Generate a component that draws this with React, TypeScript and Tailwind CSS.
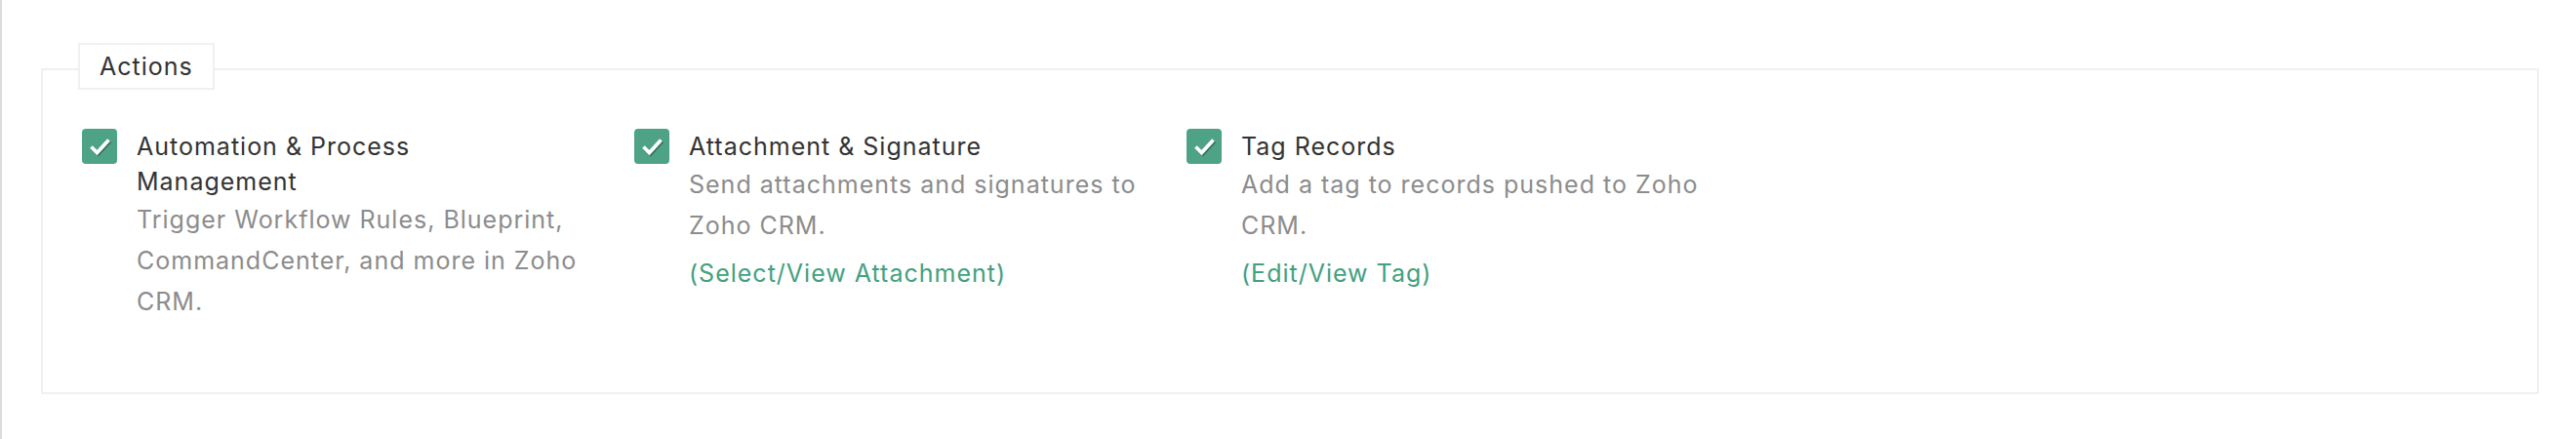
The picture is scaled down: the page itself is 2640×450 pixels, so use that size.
import React from "react";

type Action = {
  title: string;
  description: string;
  link?: string;
};

const actions: Action[] = [
  {
    title: "Automation & Process Management",
    description: "Trigger Workflow Rules, Blueprint, CommandCenter, and more in Zoho CRM.",
  },
  {
    title: "Attachment & Signature",
    description: "Send attachments and signatures to Zoho CRM.",
    link: "(Select/View Attachment)",
  },
  {
    title: "Tag Records",
    description: "Add a tag to records pushed to Zoho CRM.",
    link: "(Edit/View Tag)",
  },
];

function CheckedBox() {
  return (
    <div className="w-9 h-9 shrink-0 rounded-[4px] bg-[#4ea386]">
      <svg viewBox="0 0 36 36" className="w-9 h-9">
        <path d="M9.5 18.5 L15.5 24.5 L27.5 11.5" fill="none" stroke="rgba(0,0,0,0.3)" strokeWidth="3.8" transform="translate(1.3 1.3)" />
        <path d="M9.5 18.5 L15.5 24.5 L27.5 11.5" fill="none" stroke="#ffffff" strokeWidth="3.8" />
      </svg>
    </div>
  );
}

export default function App() {
  return (
    <div className="min-h-[450px] bg-white border-l-2 border-[#dcdcdc] pl-10 pr-[38px] pt-[70px] font-['Inter',sans-serif] text-[25px] tracking-[1px]">
      {/* Actions group */}
      <div className="border-2 border-[#f0f0f0] pb-[72px]">
        <div className="-mt-[28px] ml-9 w-fit bg-white border-2 border-[#f0f0f0] px-[20px] leading-[44px] text-[#333]">
          Actions
        </div>

        <div className="mt-10 pl-10 flex">
          {actions.map((a) => (
            <div key={a.title} className="w-[566px] flex gap-5">
              <CheckedBox />
              <div className="w-[490px]">
                <div className="max-w-[440px] leading-[36px] text-[#333]">{a.title}</div>
                <p className="leading-[42px] text-[#8c8c8c]">{a.description}</p>
                {a.link && (
                  <a className="block mt-[10px] leading-[36px] text-[#43a080] cursor-pointer">{a.link}</a>
                )}
              </div>
            </div>
          ))}
        </div>
      </div>
    </div>
  );
}
